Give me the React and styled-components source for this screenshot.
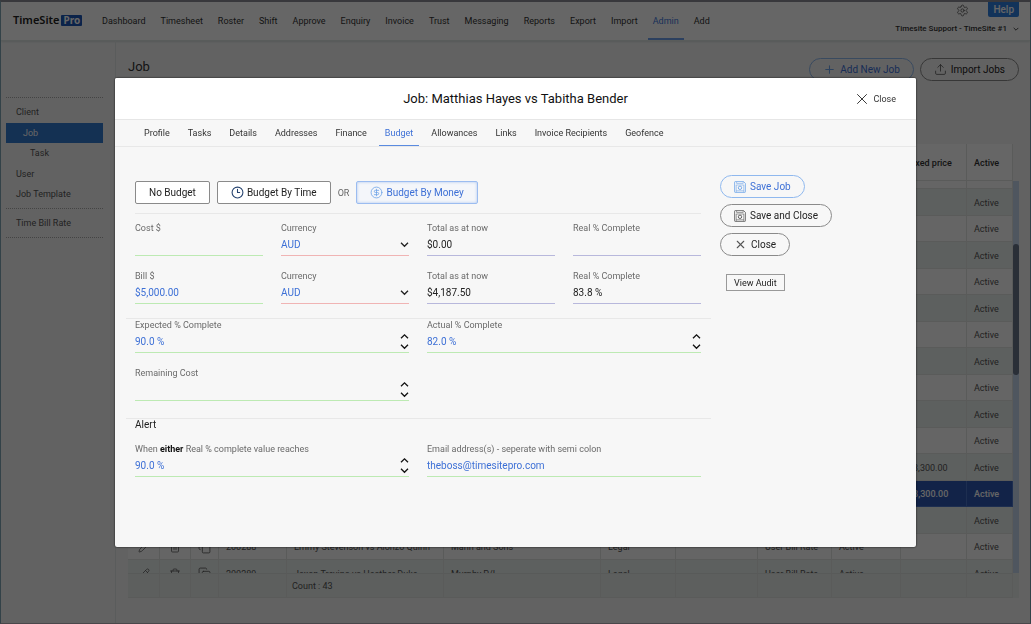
import React, { Component } from "react";
import styled, { createGlobalStyle, css } from "styled-components";
import {
  CircleDollarSign,
  Clock3,
  Copy,
  Pencil,
  Plus,
  Settings,
  Trash2,
  Upload,
  X
} from "lucide-react";

const GlobalStyle = createGlobalStyle`
  * {
    box-sizing: border-box;
  }
  body {
    margin: 0;
    background: #f5f5f5;
    color: #333;
    font-family: Roboto, sans-serif;
    font-size: 9px;
    line-height: 12px;
  }
  button, input, select {
    font: inherit;
    color: inherit;
  }
  a {
    color: inherit;
    text-decoration: none;
  }
`;

/* ---------- page behind the dialog ---------- */

const Page = styled.div`
  display: flex;
  flex-direction: column;
  height: 100vh;
  overflow: hidden;
  background: #f6f6f6;
  border: 1px solid #7fa6b4;
  border-top: 2px solid #8d8d96;
  border-bottom-color: #b9b2b8;
`;
const TopBar = styled.header`
  display: flex;
  height: 39px;
  padding: 0 11px 0 12px;
  background: #fff;
  border-bottom: 1px solid #dfe5e3;
  box-shadow: 0 1px 2px #d5dcda;
`;
const Logo = styled.a`
  display: flex;
  align-items: center;
  gap: 2px;
  width: 84px;
  height: 36px;
  color: #222;
  font-family: "Noto Sans", sans-serif;
  font-size: 11px;
  font-weight: 600;
`;
const LogoBadge = styled.span`
  padding: 0 2px;
  border-radius: 1px;
  background: #1d57b8;
  color: #fff;
  line-height: 11px;
  font-weight: 700;
  font-size: 10px;
`;
const Nav = styled.nav`
  display: flex;
  flex: 1;
  gap: 5px;
`;
const NavLink = styled.a`
  padding: 0 5px;
  line-height: 38px;
  border-bottom: 2px solid transparent;
  white-space: nowrap;
  ${props =>
    props.$active &&
    css`
      color: #3f78dc;
      border-color: #6ea0ee;
    `}
`;
const Account = styled.div`
  display: flex;
  flex-direction: column;
  align-items: flex-end;
  gap: 6px;
`;
const AccountTools = styled.div`
  display: flex;
  align-items: flex-end;
  gap: 19px;
`;
const GearButton = styled.button`
  display: flex;
  padding: 0;
  border: 0;
  background: none;
  color: #555;
`;
const HelpButton = styled.button`
  height: 15px;
  padding: 0 5px;
  border: 0;
  border-radius: 0 0 2px 2px;
  background: #2f7fe0;
  color: #fff;
  font-size: 10px;
  font-weight: 500;
`;
const AccountButton = styled.button`
  display: flex;
  align-items: center;
  gap: 6px;
  padding: 0;
  border: 0;
  background: none;
  font-size: 8px;
  font-weight: 500;
`;
const Columns = styled.div`
  display: flex;
  flex: 1;
  min-height: 0;
`;
const Sidebar = styled.aside`
  width: 115px;
  padding: 56px 12px 0 5px;
  border-right: 1px solid #e2e6e5;
  color: #555;
`;
const SideGroup = styled.ul`
  margin: 0;
  padding: 4px 0;
  border-top: 1px dotted #aaa;
  list-style: none;
  &:last-child {
    border-bottom: 1px dotted #aaa;
  }
`;
const SubGroup = styled.ul`
  margin: 1px 0;
  padding: 0;
  list-style: none;
`;
const SideLink = styled.a`
  display: block;
  padding-left: ${props => 10 + (props.$level || 0) * 7}px;
  line-height: 20px;
  ${props =>
    props.$active &&
    css`
      background: #347ad0;
      color: #fff;
    `}
`;
const Main = styled.main`
  display: flex;
  flex: 1;
  flex-direction: column;
  min-width: 0;
  padding: 17px 11px 25px 12px;
`;
const Toolbar = styled.div`
  display: flex;
  gap: 6px;
  margin-bottom: 63px;
`;
const PageTitle = styled.h1`
  flex: 1;
  margin: 0;
  font-size: 13px;
  font-weight: 400;
  line-height: 17px;
`;
const Grid = styled.div`
  display: flex;
  flex: 1;
  flex-direction: column;
  min-height: 0;
`;
const GridBody = styled.div`
  display: flex;
  flex: 1;
  min-height: 0;
  overflow: hidden;
`;
const Table = styled.table`
  flex: 1;
  table-layout: fixed;
  width: 100%;
  min-width: 0;
  border-spacing: 0;
`;
const TableFooter = styled.div`
  display: flex;
  padding-right: 6px;
  background: #e9edeb;
`;
const Col = styled.col`
  width: ${props => (props.$w ? props.$w + "px" : "auto")};
`;
const cell = css`
  padding: 1px 7px 0;
  border-bottom: 1px solid #e0e4e2;
  border-right: 1px solid #e0e4e2;
  text-align: left;
  white-space: nowrap;
`;
const Th = styled.th`
  ${cell}
  height: 37px;
  background: #fff;
  font-weight: 500;
`;
const Td = styled.td`
  ${cell}
  color: #555;
  & > svg {
    display: block;
    margin: auto;
  }
`;
const FootTd = styled(Td)`
  height: 25px;
  padding: 0 5px;
  border-top: 1px solid #dde1df;
`;
const Row = styled.tr`
  height: 27px;
  background: #fcfcfc;
  &:nth-child(2n) {
    background: #e9efed;
  }
  &:nth-child(2n + 1) {
    height: 26px;
  }
  &:first-child {
    height: 8px;
  }
  ${props =>
    props.$selected &&
    css`
      && {
        background: #2d58b4;
      }
      ${Td} {
        color: #fff;
        border-color: #4a74c8;
        font-weight: 500;
      }
    `}
`;
const ScrollTrack = styled.div`
  width: 6px;
  margin-top: 37px;
  padding-top: 63px;
  background: #c6d8ee;
`;
const ScrollThumb = styled.div`
  height: 131px;
  border-radius: 3px;
  background: #69758a;
`;

/* ---------- dialog ---------- */

const Overlay = styled.div`
  position: fixed;
  inset: 0;
  display: flex;
  padding: 78px 115px 77px;
  background: rgba(0, 0, 0, 0.6);
`;
const Dialog = styled.section`
  display: flex;
  flex: 1;
  flex-direction: column;
  min-width: 0;
  overflow: hidden;
  border-radius: 2px;
  background: #f7f7f7;
  box-shadow: 0 0 2px #000;
`;
const DialogHeader = styled.header`
  display: grid;
  grid-template-columns: 1fr auto 1fr;
  align-items: center;
  height: 42px;
  padding: 0 20px;
  background: #fff;
  border-bottom: 1px solid #e6e6e6;
`;
const DialogTitle = styled.h2`
  grid-column: 2;
  margin: 0;
  color: #111;
  font-size: 13px;
  font-weight: 400;
  line-height: 16px;
`;
const CloseLink = styled.button`
  display: flex;
  align-items: center;
  gap: 2px;
  justify-self: end;
  padding: 0;
  border: 0;
  background: none;
`;
const Tabs = styled.nav`
  display: flex;
  gap: 6px;
  height: 27px;
  padding: 0 23px;
  border-bottom: 1px solid #e8e8e8;
`;
const Tab = styled.a`
  height: 26px;
  padding: 0 6px;
  border-bottom: 1px solid transparent;
  line-height: 27px;
  white-space: nowrap;
  ${props =>
    props.$active &&
    css`
      color: #3d70d6;
      border-color: #5a8be0;
    `}
`;
const DialogBody = styled.div`
  display: grid;
  grid-template-columns: 1fr 205px;
  padding-left: 11px;
`;
const Form = styled.form`
  padding-top: 34px;
`;
const Section = styled.div`
  display: grid;
  grid-template-columns: repeat(4, 1fr);
  gap: 14px 18px;
  margin: 0 10px 0 9px;
`;
const Divider = styled.hr`
  height: 1px;
  margin: ${props => props.$top}px ${props => (props.$inset ? "10px 8px 9px" : "0 0")};
  border: 0;
  background: #e8e8e8;
`;
const BudgetTypes = styled.div`
  display: flex;
  align-items: center;
  gap: 7px;
  margin: 0 10px 0 9px;
  color: #666;
`;
const BudgetButton = styled.button`
  display: flex;
  align-items: center;
  gap: 3px;
  height: 23px;
  padding: 0 13px;
  border: 1px solid #8a8a8a;
  border-radius: 2px;
  background: #fff;
  color: #222;
  font-size: 10px;
  white-space: nowrap;
  svg {
    color: #26436f;
  }
  ${props =>
    props.$active &&
    css`
      border-color: #9bbcf0;
      background: #f4f6fa;
      color: #3d70d6;
      box-shadow: inset 0 0 3px #a9c4ee;
      svg {
        color: #6fa4e8;
      }
    `}
`;
const Field = styled.div`
  grid-column: span ${props => props.$span || 1};
  min-width: 0;
`;
const Label = styled.label`
  display: block;
  color: #6a6a6a;
  white-space: nowrap;
  b {
    color: #111;
  }
`;
const lineColors = {
  edit: "#bdeab3",
  choice: "#f0b4b4",
  fixed: "#b8b8dc"
};
const Control = styled.div`
  display: grid;
  grid-template-columns: 1fr auto;
  align-items: center;
  height: 22px;
  border-bottom: 1px solid ${props => lineColors[props.$kind]};
`;
const inputStyle = css`
  grid-row: 1;
  width: 100%;
  min-width: 0;
  height: 20px;
  padding: 0;
  border: 0;
  outline: 0;
  background: none;
  color: #3d70d6;
  font-size: 10px;
`;
const Input = styled.input`
  ${inputStyle}
  &:read-only {
    color: #222;
  }
`;
const Select = styled.select`
  ${inputStyle}
  grid-column: 1 / 3;
  appearance: none;
`;
const SelectArrow = styled.span`
  display: flex;
  grid-row: 1;
  grid-column: 2;
  pointer-events: none;
  color: #222;
`;
const Spinner = styled.div`
  display: flex;
  flex-direction: column;
`;
const SpinButton = styled.button`
  display: flex;
  align-items: center;
  height: 10px;
  padding: 0;
  border: 0;
  background: none;
  color: #111;
`;
const AlertTitle = styled.h3`
  margin: 0 9px 12px;
  font-size: 10px;
  font-weight: 400;
  line-height: 12px;
  color: #222;
`;
const Actions = styled.aside`
  display: flex;
  flex-direction: column;
  align-items: flex-start;
  gap: 6px;
  padding: 28px 0 0 9px;
`;
const PillButton = styled.button`
  display: flex;
  align-items: center;
  gap: 4px;
  height: 23px;
  padding: 0 13px;
  border: 1px solid ${props => (props.$primary ? "#8fb8ee" : "#8a8a8a")};
  border-radius: 12px;
  background: transparent;
  color: ${props => (props.$primary ? "#3d70d6" : "#222")};
  font-size: 10px;
  white-space: nowrap;
  svg {
    color: ${props => (props.$primary ? "#6fa4e8" : "#555")};
  }
`;
const AuditButton = styled.button`
  height: 17px;
  margin: 12px 0 0 6px;
  padding: 0 7px;
  border: 1px solid #999;
  background: #f7f7f7;
  color: #222;
`;

const Chevron = ({ up, size = 9 }) => (
  <svg width={size} height={size} viewBox="0 0 9 9" fill="none">
    <path
      d={up ? "M1 6.3 4.5 2.8 8 6.3" : "M1 2.8 4.5 6.3 8 2.8"}
      stroke="currentColor"
      strokeWidth="1.3"
    />
  </svg>
);

const SaveIcon = () => (
  <svg width="12" height="12" viewBox="0 0 12 12" fill="none" stroke="currentColor">
    <path d="M.6 1.2Q.6.6 1.2.6H9.6L11.4 2.4V10.8Q11.4 11.4 10.8 11.4H1.2Q.6 11.4.6 10.8Z" strokeWidth=".8" />
    <path d="M2.6.8V2.4H9.2V.8M2.2 11.2V4H9.8V11.2M2.2 9.8H9.8" strokeWidth=".6" />
    <circle cx="6" cy="6.8" r="1.7" strokeWidth=".9" />
  </svg>
);

const navItems = [
  "Dashboard", "Timesheet", "Roster", "Shift", "Approve", "Enquiry", "Invoice",
  "Trust", "Messaging", "Reports", "Export", "Import", "Admin", "Add"
];

const tabItems = [
  "Profile", "Tasks", "Details", "Addresses", "Finance", "Budget",
  "Allowances", "Links", "Invoice Recipients", "Geofence"
];

const colWidths = [32, 31, 28, 68, null, 157, 75, 82, 74, 69, 66, 46];

const emptyRow = { active: "Active" };
const jobs = [
  {},
  ...Array(10).fill(emptyRow),
  { active: "Active", price: "$3,300.00" },
  { active: "Active", price: "$3,300.00", selected: true },
  emptyRow,
  {
    code: "200288",
    name: "Emmy Stevenson vs Alonzo Quinn",
    client: "Mann and Sons",
    type: "Legal",
    rate: "User Bill Rate",
    status: "Active",
    active: "Active"
  },
  {
    code: "200289",
    name: "Jaxon Trevino vs Heather Duke",
    client: "Murphy P/L",
    type: "Legal",
    rate: "User Bill Rate",
    status: "Active",
    active: "Active"
  }
];

const Cols = () => (
  <colgroup>
    {colWidths.map((w, i) => (
      <Col key={i} $w={w} />
    ))}
  </colgroup>
);

const TextField = ({ id, label, value, kind = "edit", span }) => (
  <Field $span={span}>
    <Label htmlFor={id}>{label}</Label>
    <Control $kind={kind}>
      <Input id={id} defaultValue={value} readOnly={kind === "fixed"} />
    </Control>
  </Field>
);

const CurrencyField = ({ id }) => (
  <Field>
    <Label htmlFor={id}>Currency</Label>
    <Control $kind="choice">
      <Select id={id} defaultValue="AUD">
        <option>AUD</option>
        <option>NZD</option>
        <option>USD</option>
      </Select>
      <SelectArrow>
        <Chevron />
      </SelectArrow>
    </Control>
  </Field>
);

class SpinField extends Component {
  constructor(props) {
    super(props);
    this.state = { value: props.value };
  }

  step = amount => {
    const next = (parseFloat(this.state.value) || 0) + amount;
    this.setState({ value: next.toFixed(1) + (this.props.unit || "") });
  };

  render() {
    const { id, label } = this.props;
    return (
      <Field $span={2}>
        <Label htmlFor={id}>{label}</Label>
        <Control $kind="edit">
          <Input
            id={id}
            value={this.state.value}
            onChange={e => this.setState({ value: e.target.value })}
          />
          <Spinner>
            <SpinButton type="button" aria-label="Increase" onClick={() => this.step(1)}>
              <Chevron up />
            </SpinButton>
            <SpinButton type="button" aria-label="Decrease" onClick={() => this.step(-1)}>
              <Chevron />
            </SpinButton>
          </Spinner>
        </Control>
      </Field>
    );
  }
}

const JobRow = ({ job }) => (
  <Row $selected={job.selected}>
    <Td>{job.code && <Pencil size={12} strokeWidth={1.5} />}</Td>
    <Td>{job.code && <Trash2 size={12} strokeWidth={1.5} />}</Td>
    <Td>{job.code && <Copy size={13} strokeWidth={1.5} />}</Td>
    <Td>{job.code}</Td>
    <Td>{job.name}</Td>
    <Td>{job.client}</Td>
    <Td>{job.type}</Td>
    <Td />
    <Td>{job.rate}</Td>
    <Td>{job.status}</Td>
    <Td>{job.price}</Td>
    <Td>{job.active}</Td>
  </Row>
);

const JobsPage = () => (
  <Page>
    <TopBar>
      <Logo href="#">
        TimeSite<LogoBadge>Pro</LogoBadge>
      </Logo>
      <Nav>
        {navItems.map(item => (
          <NavLink key={item} href="#" $active={item === "Admin"}>
            {item}
          </NavLink>
        ))}
      </Nav>
      <Account>
        <AccountTools>
          <GearButton aria-label="Settings">
            <Settings size={13} strokeWidth={1.5} />
          </GearButton>
          <HelpButton>Help</HelpButton>
        </AccountTools>
        <AccountButton>
          Timesite Support - TimeSite #1
          <Chevron size={6} />
        </AccountButton>
      </Account>
    </TopBar>
    <Columns>
      <Sidebar>
        <SideGroup>
          <li>
            <SideLink href="#">Client</SideLink>
            <SubGroup>
              <li>
                <SideLink href="#" $level={1} $active>
                  Job
                </SideLink>
              </li>
              <li>
                <SideLink href="#" $level={2}>
                  Task
                </SideLink>
              </li>
            </SubGroup>
          </li>
          <li>
            <SideLink href="#">User</SideLink>
          </li>
          <li>
            <SideLink href="#">Job Template</SideLink>
          </li>
        </SideGroup>
        <SideGroup>
          <li>
            <SideLink href="#">Time Bill Rate</SideLink>
          </li>
        </SideGroup>
      </Sidebar>
      <Main>
        <Toolbar>
          <PageTitle>Job</PageTitle>
          <PillButton $primary>
            <Plus size={13} strokeWidth={2} />
            Add New Job
          </PillButton>
          <PillButton>
            <Upload size={13} strokeWidth={1.5} />
            Import Jobs
          </PillButton>
        </Toolbar>
        <Grid>
          <GridBody>
            <Table>
              <Cols />
              <thead>
                <tr>
                  {colWidths.slice(2).map((w, i) => (
                    <Th key={i} colSpan={i === 0 ? 3 : 1}>
                      {i === 8 && "Fixed price"}
                      {i === 9 && "Active"}
                    </Th>
                  ))}
                </tr>
              </thead>
              <tbody>
                {jobs.map((job, i) => (
                  <JobRow key={i} job={job} />
                ))}
              </tbody>
            </Table>
            <ScrollTrack>
              <ScrollThumb />
            </ScrollTrack>
          </GridBody>
          <TableFooter>
            <Table>
              <Cols />
              <tbody>
                <tr>
                  {colWidths.map((w, i) => (
                    <FootTd key={i}>{i === 4 && "Count : 43"}</FootTd>
                  ))}
                </tr>
              </tbody>
            </Table>
          </TableFooter>
        </Grid>
      </Main>
    </Columns>
  </Page>
);

const JobDialog = () => (
  <Overlay>
    <Dialog role="dialog" aria-labelledby="dialog-title">
      <DialogHeader>
        <DialogTitle id="dialog-title">Job: Matthias Hayes vs Tabitha Bender</DialogTitle>
        <CloseLink>
          <X size={18} strokeWidth={1.3} />
          Close
        </CloseLink>
      </DialogHeader>
      <Tabs>
        {tabItems.map(item => (
          <Tab key={item} href="#" $active={item === "Budget"}>
            {item}
          </Tab>
        ))}
      </Tabs>
      <DialogBody>
        <Form>
          <BudgetTypes>
            <BudgetButton type="button">No Budget</BudgetButton>
            <BudgetButton type="button">
              <Clock3 size={13} strokeWidth={2} />
              Budget By Time
            </BudgetButton>
            OR
            <BudgetButton type="button" $active>
              <CircleDollarSign size={13} strokeWidth={1.5} />
              Budget By Money
            </BudgetButton>
          </BudgetTypes>
          <Divider $top={9} $inset />
          <Section>
            <TextField id="cost" label="Cost $" value="" />
            <CurrencyField id="cost-currency" />
            <TextField id="cost-total" label="Total as at now" value="$0.00" kind="fixed" />
            <TextField id="cost-real" label="Real % Complete" value="" kind="fixed" />
            <TextField id="bill" label="Bill $" value="$5,000.00" />
            <CurrencyField id="bill-currency" />
            <TextField id="bill-total" label="Total as at now" value="$4,187.50" kind="fixed" />
            <TextField id="bill-real" label="Real % Complete" value="83.8 %" kind="fixed" />
          </Section>
          <Divider $top={14} />
          <Section>
            <SpinField id="expected" label="Expected % Complete" value="90.0 %" unit=" %" />
            <SpinField id="actual" label="Actual % Complete" value="82.0 %" unit=" %" />
            <SpinField id="remaining" label="Remaining Cost" value="" />
          </Section>
          <Divider $top={17} />
          <AlertTitle>Alert</AlertTitle>
          <Section>
            <SpinField
              id="alert-at"
              label={
                <>
                  When <b>either</b> Real % complete value reaches
                </>
              }
              value="90.0 %"
              unit=" %"
            />
            <TextField
              id="emails"
              label="Email address(s) - seperate with semi colon"
              value="theboss@timesitepro.com"
              span={2}
            />
          </Section>
        </Form>
        <Actions>
          <PillButton $primary>
            <SaveIcon />
            Save Job
          </PillButton>
          <PillButton>
            <SaveIcon />
            Save and Close
          </PillButton>
          <PillButton>
            <X size={13} strokeWidth={2} />
            Close
          </PillButton>
          <AuditButton>View Audit</AuditButton>
        </Actions>
      </DialogBody>
    </Dialog>
  </Overlay>
);

export default class App extends Component {
  render() {
    return (
      <>
        <GlobalStyle />
        <JobsPage />
        <JobDialog />
      </>
    );
  }
}
